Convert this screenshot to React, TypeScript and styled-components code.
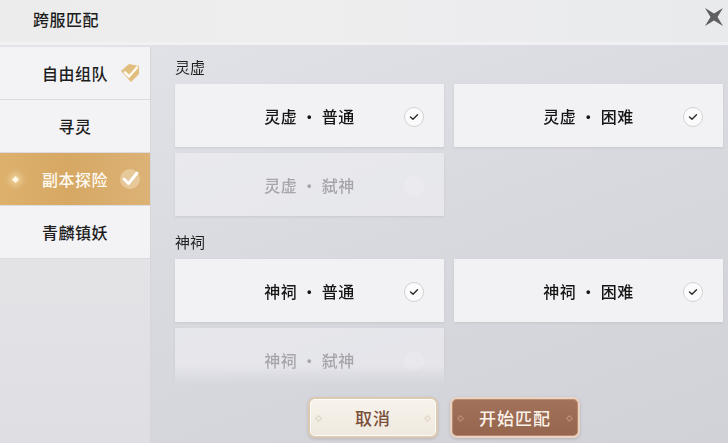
import React from 'react';
import styled, { createGlobalStyle } from 'styled-components';

const GlobalStyle = createGlobalStyle`
html, body {
    margin: 0;
    padding: 0;
    width: 728px;
    height: 443px;
    overflow: hidden;
}
body {
    font-family: "Noto Sans CJK SC", "Noto Sans", sans-serif;
    background: #dcdde2;
}
`;

interface Mode {
    label: string;
    disabled?: boolean;
}

interface Group {
    title: string;
    modes: Mode[];
}

const menu = ['自由组队', '寻灵', '副本探险', '青麟镇妖'];

const groups: Group[] = [
    {
        title: '灵虚',
        modes: [
            { label: '灵虚 · 普通' },
            { label: '灵虚 · 困难' },
            { label: '灵虚 · 弑神', disabled: true },
        ],
    },
    {
        title: '神祠',
        modes: [
            { label: '神祠 · 普通' },
            { label: '神祠 · 困难' },
            { label: '神祠 · 弑神', disabled: true },
        ],
    },
];

const Window = styled.div`
width: 728px;
height: 443px;
display: flex;
flex-direction: column;
background: linear-gradient(160deg, #e4e5ea 0%, #d8d9df 55%, #d1d1d8 100%);
`;

const Header = styled.div`
height: 42px;
flex-shrink: 0;
display: flex;
align-items: flex-start;
justify-content: space-between;
padding: 0 2px 0 33px;
background: linear-gradient(90deg, #ececec 0%, #eeeeef 40%, #e9eaec 100%);
border-bottom: 3px solid #f1f1f3;
`;

const Title = styled.div`
font-size: 16px;
line-height: 20px;
margin-top: 9px;
color: #1c1c1c;
font-weight: 500;
letter-spacing: 0.5px;
`;

const Close = styled.div`
width: 24px;
height: 24px;
margin-top: 5px;
display: flex;
align-items: center;
justify-content: center;
`;

const Body = styled.div`
flex: 1;
display: flex;
min-height: 0;
padding-top: 2px;
`;

const Sidebar = styled.div`
width: 150px;
flex-shrink: 0;
display: flex;
flex-direction: column;
background: linear-gradient(180deg, #e9e9ec 0%, #dfdfe3 100%);
border-right: 1px solid #d6d6da;
`;

const MenuItem = styled.div<{ active?: boolean }>`
height: 52px;
display: flex;
align-items: center;
justify-content: center;
position: relative;
font-size: 16px;
font-weight: 500;
color: ${p => (p.active ? '#fffaf0' : '#1d1d1d')};
background: ${p =>
        p.active
            ? 'linear-gradient(90deg, #ddb06c 0%, #d6a864 45%, #dcb276 100%)'
            : '#f3f3f6'};
border-bottom: 1px solid #dcdce0;
letter-spacing: 0.5px;
`;

const MenuCheck = styled.div`
position: absolute;
right: 8px;
top: 50%;
transform: translateY(-50%);
width: 24px;
height: 24px;
`;

const Diamond = styled.div`
position: absolute;
left: 13px;
top: 50%;
width: 5px;
height: 5px;
margin-top: -2.5px;
background: #fff8e6;
transform: rotate(45deg);
box-shadow: 0 0 6px 3px rgba(255, 240, 200, 0.55);
`;

const Main = styled.div`
flex: 1;
display: flex;
flex-direction: column;
min-width: 0;
`;

const List = styled.div`
flex: 1;
min-height: 0;
overflow: hidden;
padding: 9px 6px 0 24px;
-webkit-mask-image: linear-gradient(180deg, #000 0, #000 318px, rgba(0, 0, 0, 0.35) 330px, transparent 338px);
mask-image: linear-gradient(180deg, #000 0, #000 318px, rgba(0, 0, 0, 0.35) 330px, transparent 338px);
`;

const Section = styled.div`
margin-bottom: 15px;
`;

const SectionTitle = styled.div`
font-size: 15px;
color: #1f1f1f;
height: 22px;
line-height: 22px;
margin-bottom: 6px;
`;

const Grid = styled.div`
display: grid;
grid-template-columns: 269px 269px;
column-gap: 10px;
row-gap: 6px;
`;

const Card = styled.div<{ disabled?: boolean }>`
height: 63px;
position: relative;
display: flex;
align-items: center;
justify-content: center;
background: ${p => (p.disabled ? 'rgba(243, 243, 246, 0.55)' : '#f2f2f5')};
font-size: 16px;
font-weight: 500;
color: ${p => (p.disabled ? '#a6a6aa' : '#151515')};
box-shadow: 0 1px 2px rgba(150, 150, 160, 0.25);
letter-spacing: 0.5px;
`;

const Tick = styled.div<{ disabled?: boolean }>`
position: absolute;
right: 20px;
top: 50%;
width: 18px;
height: 18px;
margin-top: -9px;
border-radius: 50%;
background: ${p => (p.disabled ? 'rgba(255,255,255,0.15)' : '#fbfbfc')};
border: 1px solid ${p => (p.disabled ? 'rgba(235,235,240,0.3)' : '#d2d2d6')};
display: flex;
align-items: center;
justify-content: center;
`;

const Footer = styled.div`
height: 55px;
box-sizing: border-box;
flex-shrink: 0;
display: flex;
justify-content: center;
align-items: flex-start;
gap: 12px;
padding: 9px 0 0 9px;
`;

const Button = styled.div<{ primary?: boolean }>`
width: 130px;
height: 41px;
box-sizing: border-box;
border-radius: 7px;
position: relative;
display: flex;
align-items: center;
justify-content: center;
font-size: 17px;
font-weight: 500;
letter-spacing: 1px;
color: ${p => (p.primary ? '#fbf3ea' : '#7a4f3a')};
background: ${p =>
        p.primary
            ? 'linear-gradient(180deg, #a2725a 0%, #96654d 100%)'
            : 'linear-gradient(180deg, #f7f3ec 0%, #efe9df 100%)'};
border: 2px solid ${p => (p.primary ? '#e9d3c2' : '#dccbb1')};
box-shadow: inset 0 0 0 1px ${p => (p.primary ? 'rgba(200,150,120,0.7)' : 'rgba(255,255,255,0.8)')},
    0 1px 3px rgba(120, 100, 90, 0.3);
`;

const Stud = styled.span<{ side: 'left' | 'right'; primary?: boolean }>`
position: absolute;
top: 50%;
${p => p.side}: 6px;
width: 3px;
height: 3px;
margin-top: -2px;
transform: rotate(45deg);
border: 1px solid ${p => (p.primary ? 'rgba(230,195,170,0.45)' : 'rgba(210,195,170,0.6)')};
`;

function CheckTag() {
    return (
        <svg width="24" height="24" viewBox="0 0 24 24">
            <path d="M3 10 L11 3 L21 5 L21 13 L13 21 Z" fill="#e1bd7e" />
            <path d="M7 11.5 L11 15.5 L19 6.5" stroke="#fffaf0" strokeWidth="2.6" fill="none" strokeLinecap="round" strokeLinejoin="round" />
        </svg>
    );
}

function ActiveCheck() {
    return (
        <svg width="24" height="24" viewBox="0 0 24 24">
            <circle cx="12" cy="12" r="10" fill="rgba(255,245,225,0.35)" />
            <path d="M6 12 L10.5 16.5 L19 6" stroke="#ffffff" strokeWidth="2.8" fill="none" strokeLinecap="round" strokeLinejoin="round" />
        </svg>
    );
}

function SmallCheck({ faded }: { faded?: boolean }) {
    return (
        <svg width="10" height="8" viewBox="0 0 10 8">
            <path d="M1.5 4 L4 6.3 L8.5 1.8" stroke={faded ? 'rgba(230,230,235,0.15)' : '#2a2a2a'} strokeWidth="1.4" fill="none" strokeLinecap="round" strokeLinejoin="round" />
        </svg>
    );
}

function App() {
    return (
        <>
            <GlobalStyle />
            <Window>
                <Header>
                    <Title>跨服匹配</Title>
                    <Close>
                        <svg width="20" height="20" viewBox="0 0 20 20">
                            <path d="M1 1 L10 6.5 L19 1 L13.5 10 L19 19 L10 13.5 L1 19 L6.5 10 Z" fill="#5f5f63" />
                        </svg>
                    </Close>
                </Header>
                <Body>
                    <Sidebar>
                        {menu.map((m, i) => (
                            <MenuItem key={m} active={i === 2}>
                                {i === 2 && <Diamond />}
                                {m}
                                {i === 0 && (
                                    <MenuCheck>
                                        <CheckTag />
                                    </MenuCheck>
                                )}
                                {i === 2 && (
                                    <MenuCheck>
                                        <ActiveCheck />
                                    </MenuCheck>
                                )}
                            </MenuItem>
                        ))}
                    </Sidebar>
                    <Main>
                        <List>
                            {groups.map(g => (
                                <Section key={g.title}>
                                    <SectionTitle>{g.title}</SectionTitle>
                                    <Grid>
                                        {g.modes.map(mode => (
                                            <Card key={mode.label} disabled={mode.disabled}>
                                                {mode.label}
                                                <Tick disabled={mode.disabled}>
                                                    <SmallCheck faded={mode.disabled} />
                                                </Tick>
                                            </Card>
                                        ))}
                                    </Grid>
                                </Section>
                            ))}
                        </List>
                        <Footer>
                            <Button>
                                <Stud side="left" />
                                取消
                                <Stud side="right" />
                            </Button>
                            <Button primary>
                                <Stud side="left" primary />
                                开始匹配
                                <Stud side="right" primary />
                            </Button>
                        </Footer>
                    </Main>
                </Body>
            </Window>
        </>
    );
}

export default App;
